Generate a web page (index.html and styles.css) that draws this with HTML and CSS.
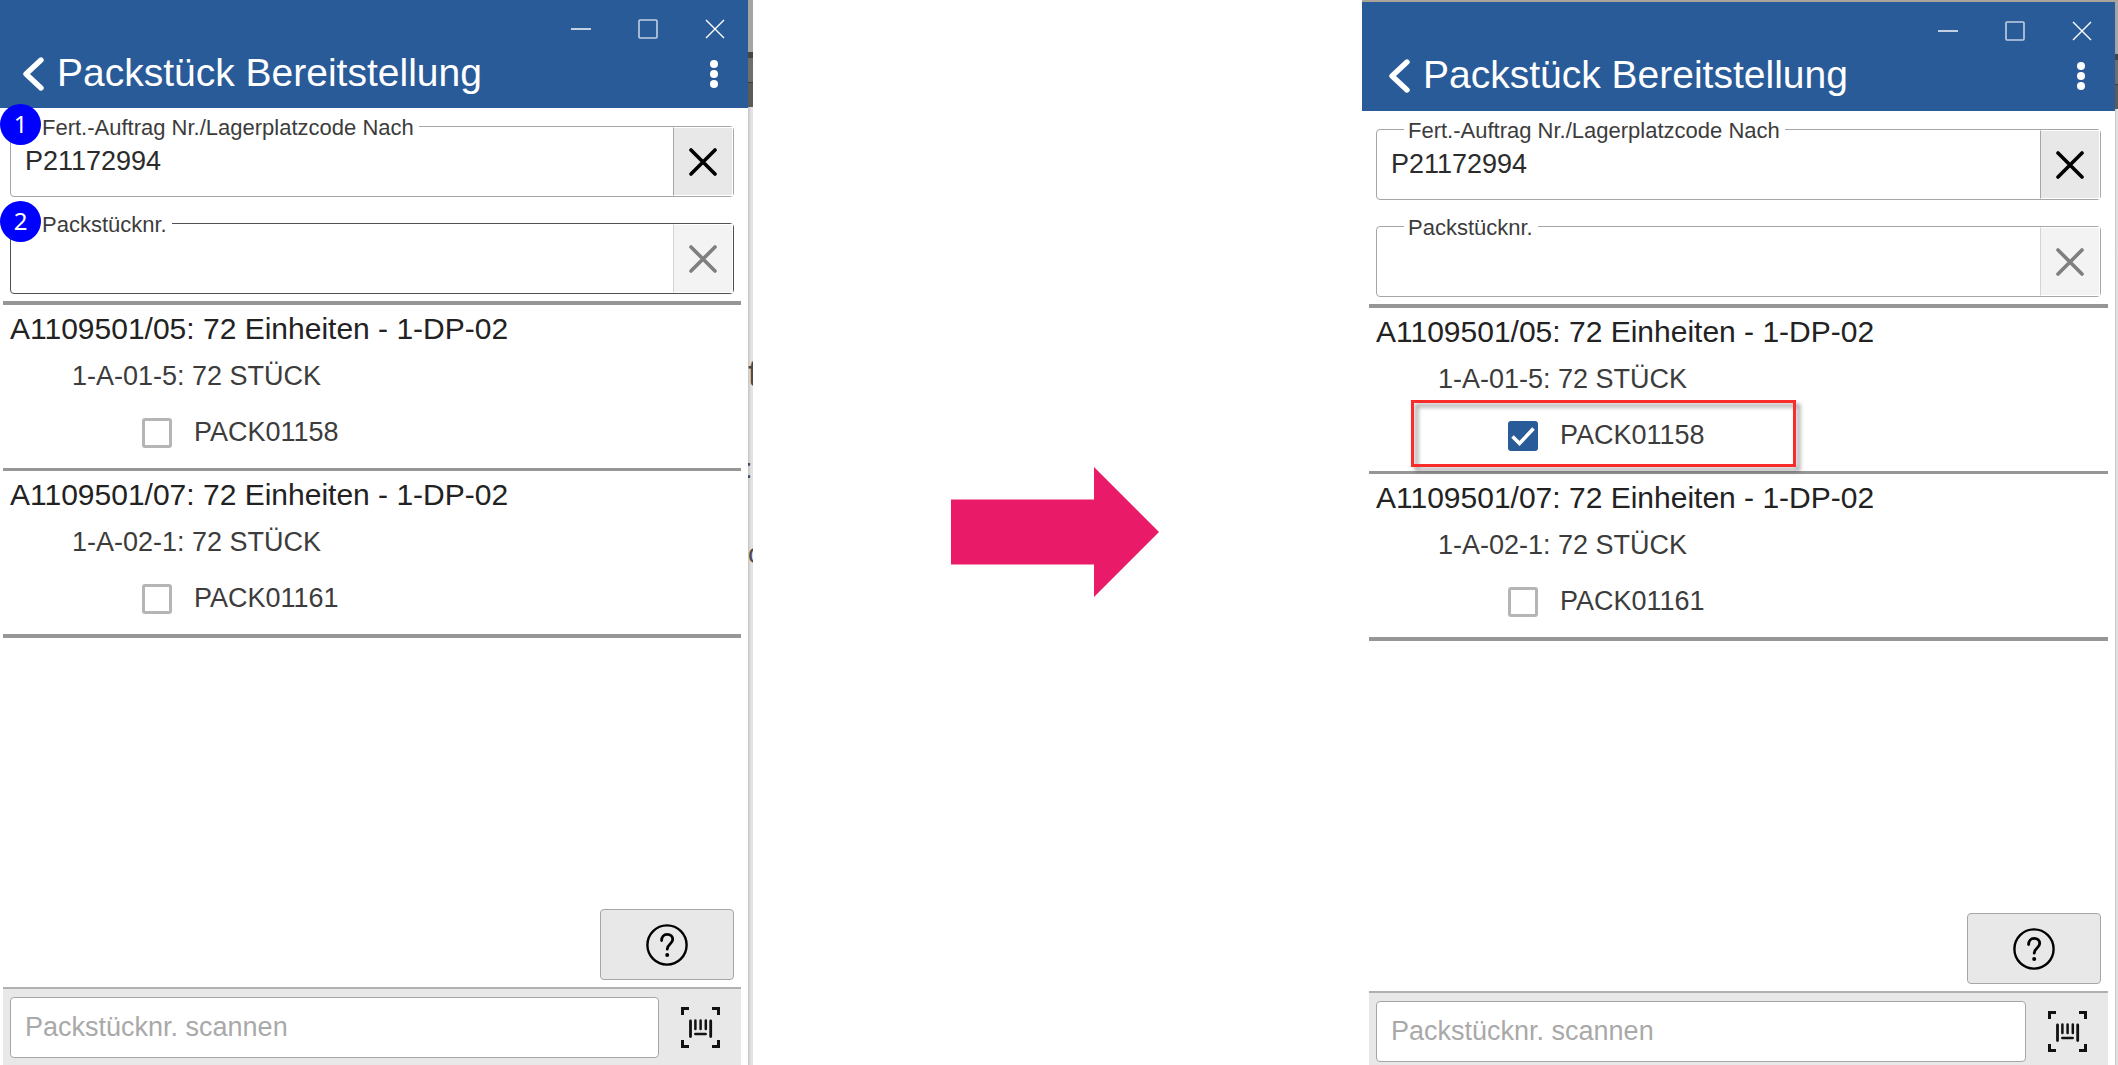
FILE: index.html
```html
<!DOCTYPE html>
<html lang="de">
<head>
<meta charset="utf-8">
<meta name="viewport" content="width=device-width, initial-scale=1">
<title>Packstück Bereitstellung</title>
<link rel="stylesheet" href="styles.css">
</head>
<body>
<svg class="sprite" aria-hidden="true">
  <symbol id="i-min" viewBox="0 0 20 20"><path d="M0 10h20" stroke-width="2"/></symbol>
  <symbol id="i-max" viewBox="0 0 20 20"><rect x="1" y="1" width="18" height="18" rx="1" stroke-width="1.6"/></symbol>
  <symbol id="i-close" viewBox="0 0 20 20"><path d="M1 1l18 18M19 1L1 19" stroke-width="1.4"/></symbol>
  <symbol id="i-back" viewBox="0 0 22 34"><path d="M19 3L4 17l15 14" stroke-width="5.4" stroke-linecap="round" stroke-linejoin="round"/></symbol>
  <symbol id="i-more" viewBox="0 0 8 28"><g fill="currentColor" stroke="none"><circle cx="4" cy="4" r="4"/><circle cx="4" cy="14" r="4"/><circle cx="4" cy="24" r="4"/></g></symbol>
  <symbol id="i-clear" viewBox="0 0 28 28"><path d="M2 2l24 24M26 2L2 26" stroke-width="3.6" stroke-linecap="round"/></symbol>
  <symbol id="i-help" viewBox="0 0 42 42"><circle cx="21" cy="21" r="19.6" stroke-width="2.4"/><path d="M15.6 16.6c0-3.8 2.2-6.2 5.6-6.2 3.400 0 5.500 2.200 5.500 5.100 0 4.500-5.500 4.500-5.500 9.700" stroke-width="2.8" stroke-linecap="round"/><circle cx="21.200" cy="31" r="2" fill="currentColor" stroke="none"/></symbol>
  <symbol id="i-scan" viewBox="0 0 39 41"><path d="M1.500 8V1.500H8M31 1.500h6.500V8M1.500 33v6.500H8M31 39.500h6.500V33" stroke-width="3"/><path d="M9.500 14v15.500M29.700 14v15.500" stroke-width="2.800" stroke-linecap="round"/><path d="M14.400 13.500v8.500M19.600 13.500v8.500M24.800 13.500v8.500M14.300 27h10.400" stroke-width="2.500" stroke-linecap="round"/></symbol>
</svg>

<main class="compare">
  <section class="window">
    <div class="app">
      <header class="bar">
        <div class="controls">
          <button type="button" aria-label="Minimieren"><svg width="20" height="20"><use href="#i-min"/></svg></button>
          <button type="button" aria-label="Maximieren"><svg width="20" height="20"><use href="#i-max"/></svg></button>
          <button type="button" aria-label="Schließen"><svg width="20" height="20"><use href="#i-close"/></svg></button>
        </div>
        <div class="heading">
          <button class="back" type="button" aria-label="Zurück"><svg width="22" height="34"><use href="#i-back"/></svg></button>
          <h1>Packstück Bereitstellung</h1>
          <button class="more" type="button" aria-label="Mehr"><svg width="8" height="28"><use href="#i-more"/></svg></button>
        </div>
      </header>
      <form class="body">
        <div class="fields">
          <fieldset class="field">
            <legend><label for="a-order">Fert.-Auftrag Nr./Lagerplatzcode Nach</label></legend>
            <div class="entry"><input id="a-order" type="text" value="P21172994"><button type="button" aria-label="Leeren"><svg width="28" height="28"><use href="#i-clear"/></svg></button></div>
            <span class="badge">1</span>
          </fieldset>
          <fieldset class="field field--active">
            <legend><label for="a-pack">Packstücknr.</label></legend>
            <div class="entry"><input id="a-pack" type="text"><button type="button" aria-label="Leeren" disabled><svg width="28" height="28"><use href="#i-clear"/></svg></button></div>
            <span class="badge">2</span>
          </fieldset>
        </div>
        <div class="list">
          <section class="group">
            <h2>A1109501/05: 72 Einheiten - 1-DP-02</h2>
            <p>1-A-01-5: 72 STÜCK</p>
            <label class="pack"><input type="checkbox"><span>PACK01158</span></label>
          </section>
          <section class="group">
            <h2>A1109501/07: 72 Einheiten - 1-DP-02</h2>
            <p>1-A-02-1: 72 STÜCK</p>
            <label class="pack"><input type="checkbox"><span>PACK01161</span></label>
          </section>
        </div>
        <div class="actions"><button class="help" type="button" aria-label="Hilfe"><svg width="42" height="42"><use href="#i-help"/></svg></button></div>
        <footer class="scan">
          <input type="text" placeholder="Packstücknr. scannen" aria-label="Packstücknr. scannen">
          <button type="button" aria-label="Barcode scannen"><svg width="39" height="41"><use href="#i-scan"/></svg></button>
        </footer>
      </form>
    </div>
    <div class="behind" aria-hidden="true">
      <span class="peek peek--t">t</span>
      <span class="peek peek--dots">:</span>
      <span class="peek peek--o">o</span>
    </div>
  </section>

  <div class="between">
    <svg width="208" height="130" viewBox="0 0 208 130" role="img" aria-label="danach"><path d="M0 32.500h143V0l65 65-65 65V97.500H0z" fill="#e91b69" stroke="none"/></svg>
  </div>

  <section class="window window--after">
    <div class="app">
      <header class="bar">
        <div class="controls">
          <button type="button" aria-label="Minimieren"><svg width="20" height="20"><use href="#i-min"/></svg></button>
          <button type="button" aria-label="Maximieren"><svg width="20" height="20"><use href="#i-max"/></svg></button>
          <button type="button" aria-label="Schließen"><svg width="20" height="20"><use href="#i-close"/></svg></button>
        </div>
        <div class="heading">
          <button class="back" type="button" aria-label="Zurück"><svg width="22" height="34"><use href="#i-back"/></svg></button>
          <h1>Packstück Bereitstellung</h1>
          <button class="more" type="button" aria-label="Mehr"><svg width="8" height="28"><use href="#i-more"/></svg></button>
        </div>
      </header>
      <form class="body">
        <div class="fields">
          <fieldset class="field">
            <legend><label for="b-order">Fert.-Auftrag Nr./Lagerplatzcode Nach</label></legend>
            <div class="entry"><input id="b-order" type="text" value="P21172994"><button type="button" aria-label="Leeren"><svg width="28" height="28"><use href="#i-clear"/></svg></button></div>
          </fieldset>
          <fieldset class="field">
            <legend><label for="b-pack">Packstücknr.</label></legend>
            <div class="entry"><input id="b-pack" type="text"><button type="button" aria-label="Leeren" disabled><svg width="28" height="28"><use href="#i-clear"/></svg></button></div>
          </fieldset>
        </div>
        <div class="list">
          <section class="group">
            <h2>A1109501/05: 72 Einheiten - 1-DP-02</h2>
            <p>1-A-01-5: 72 STÜCK</p>
            <label class="pack pack--marked"><input type="checkbox" checked><span>PACK01158</span></label>
          </section>
          <section class="group">
            <h2>A1109501/07: 72 Einheiten - 1-DP-02</h2>
            <p>1-A-02-1: 72 STÜCK</p>
            <label class="pack"><input type="checkbox"><span>PACK01161</span></label>
          </section>
        </div>
        <div class="actions"><button class="help" type="button" aria-label="Hilfe"><svg width="42" height="42"><use href="#i-help"/></svg></button></div>
        <footer class="scan">
          <input type="text" placeholder="Packstücknr. scannen" aria-label="Packstücknr. scannen">
          <button type="button" aria-label="Barcode scannen"><svg width="39" height="41"><use href="#i-scan"/></svg></button>
        </footer>
      </form>
    </div>
    <div class="behind" aria-hidden="true"></div>
  </section>
</main>
</body>
</html>
```
FILE: styles.css
```css
*, *::after { box-sizing: border-box; }

body {
  margin: 0;
  background: #fff;
  color: #2b2b2b;
  font-family: "Liberation Sans", Arial, sans-serif;
  font-size: 27px;
}

button, input { font: inherit; color: inherit; margin: 0; }
button { display: flex; align-items: center; justify-content: center; padding: 0; border: 0; background: none; }
svg { display: block; fill: none; stroke: currentColor; }
h1, h2, p { margin: 0; font-weight: 400; }

.sprite { position: absolute; width: 0; height: 0; }

.compare {
  display: grid;
  grid-template-columns: 753fr 609fr 756fr;
  min-height: 100vh;
}

.between { display: flex; align-items: center; justify-content: center; padding: 0 6px 2px 0; }

/* One app window with a sliver of the desktop at its right */
.window {
  --edge: 3px;
  --behind: 5px;
  --foot: 7px;
  display: flex;
  min-width: 0;
}
.window--after {
  --edge: 7px;
  --behind: 3px;
  --foot: 3px;
  border-top: 2px solid #aaa39a;
}

.app { flex: 1; min-width: 0; display: flex; flex-direction: column; }

.bar { background: #2a5b99; color: #fff; padding-bottom: 17px; }
.window--after .bar { padding-bottom: 18px; }
.controls { display: flex; justify-content: flex-end; color: #c3d0e2; }
.controls button { width: 67px; height: 57px; }
.controls button:last-child { color: #fff; }
.heading { display: flex; align-items: center; padding-left: calc(var(--edge) + 19px); }
.heading h1 { flex: 1; padding: 0 0 3px 13px; font-size: 39px; line-height: 31px; }
.more { width: 68px; height: 34px; }

.body { flex: 1; display: flex; flex-direction: column; padding: 4px 7px 0 var(--edge); }

.fields { display: flex; flex-direction: column; gap: 12px; padding: 0 7px 7px; }

.field { position: relative; min-width: 0; margin: 0; padding: 0; border: 1px solid #a6a6a6; border-radius: 4px; }
.field--active { border-color: #505050; }
.field legend { margin-left: 27px; padding: 4px 5px 0 4px; font-size: 22px; line-height: 24px; color: #3c3c3c; }
.entry { display: flex; height: 69px; margin-top: -13px; }
.entry input { flex: 1; min-width: 0; padding: 0 14px; border: 0; background: none; outline: 0; }
.entry button { width: 60px; border: 1px solid #fff; border-left-color: #a6a6a6; background: #e8e8e8; color: #000; }
.entry button:disabled { border-left-color: #d4d4d4; background: #f3f3f3; color: #7f7f7f; }

.badge {
  position: absolute;
  left: -11px;
  top: -36px;
  width: 41px;
  height: 41px;
  border-radius: 50%;
  background: #00f;
  color: #fff;
  font: 24px/40px "Noto Sans", sans-serif;
  text-align: center;
}

.list { border: solid #969696; border-width: 4px 0; }
.group { padding: 6px 0 0 7px; }
.group + .group { border-top: 3px solid #969696; }
.group h2 { font-size: 30px; line-height: 36px; color: #222; }
.group p { margin-top: 13px; padding-left: 62px; line-height: 32px; color: #3c3c3c; }

.pack { position: relative; display: flex; align-items: center; gap: 22px; padding: 24px 0 20px 132px; line-height: 32px; color: #3c3c3c; }
.pack input {
  appearance: none;
  width: 30px;
  height: 30px;
  margin-top: 2px;
  border: 3px solid #b5b5b5;
  border-radius: 3px;
  background: #fff;
}
.pack input:checked {
  border-color: #2a5b99;
  background: #2a5b99 url("data:image/svg+xml,%3Csvg xmlns='http://www.w3.org/2000/svg' viewBox='0 0 24 24'%3E%3Cpath d='M1.500 12.500l7 7L22.500 4.500' fill='none' stroke='%23fff' stroke-width='3.600'/%3E%3C/svg%3E") center / 24px no-repeat;
}
.pack--marked::after {
  content: "";
  position: absolute;
  left: 35px;
  top: 5px;
  bottom: 4px;
  width: 385px;
  border: 3px solid #f92b2b;
  filter: drop-shadow(4px 4px 2px rgb(0 0 0 / 40%));
  pointer-events: none;
}

.actions { display: flex; justify-content: flex-end; margin-top: auto; padding: 7px; }
.help { width: 134px; height: 71px; border: 1px solid #a6a6a6; border-radius: 4px; background: #e8e8e8; color: #000; }

.scan { display: flex; padding: 8px 0 var(--foot) 7px; border-top: 2px solid #b0b0b0; background: #e8e8e8; }
.scan input { flex: 1; min-width: 0; height: 61px; padding: 0 14px; border: 1px solid #a6a6a6; border-radius: 4px; background: #fff; }
.scan input::placeholder { color: #a9a9a9; opacity: 1; }
.scan button { width: 82px; color: #111; }

/* Desktop showing through beside the window */
.behind {
  position: relative;
  width: var(--behind);
  overflow: hidden;
  background:
    linear-gradient(#a5a5a5 52px, #454545 52px 58px, #6e6e6e 58px 82px, #3c3c3c 82px 83px, #5a5a5a 83px 107px, transparent 107px),
    linear-gradient(90deg, #c4c4c4, #e3e3e3 60%);
}
.peek { position: absolute; left: 0; line-height: 32px; color: #4a4a4a; }
.peek--t { top: 358px; font-size: 36px; }
.peek--dots { top: 453px; left: -3px; }
.peek--o { top: 538px; }
```
